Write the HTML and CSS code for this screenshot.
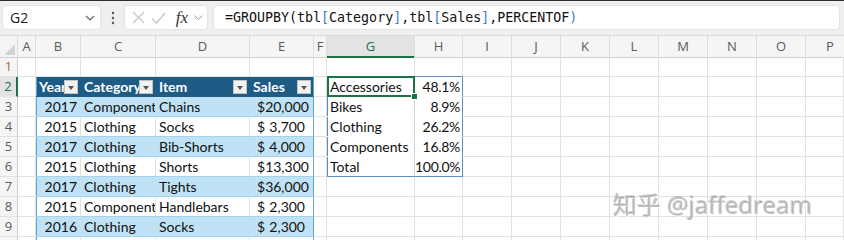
FILE: index.html
```html
<!DOCTYPE html>
<html lang="en">
<head>
    <meta charset="UTF-8">
    <meta name="viewport" content="width=device-width, initial-scale=1.0">
    <title>GROUPBY PERCENTOF</title>
    <link rel="stylesheet" href="styles.css">
</head>
<body>
<div class="app">
    <div class="toolbar">
        <div class="namebox">
            <span>G2</span>
            <svg class="chev" width="10" height="6" viewBox="0 0 10 6"><path d="M1 1l4 4 4-4" fill="none" stroke="#666" stroke-width="1.2"/></svg>
        </div>
        <div class="grip">
            <svg width="4" height="14" viewBox="0 0 4 14"><circle cx="2" cy="2" r="1.2" fill="#555"/><circle cx="2" cy="7" r="1.2" fill="#555"/><circle cx="2" cy="12" r="1.2" fill="#555"/></svg>
        </div>
        <div class="fxbox">
            <svg class="ico" width="13" height="13" viewBox="0 0 13 13"><path d="M1 1l11 11M12 1L1 12" stroke="#c4c4c4" stroke-width="1.2"/></svg>
            <svg class="ico" width="15" height="12" viewBox="0 0 15 12"><path d="M1 6.5l4.5 4.5L14 1" fill="none" stroke="#c4c4c4" stroke-width="1.2"/></svg>
            <span class="fx">fx</span>
            <svg width="9" height="5" viewBox="0 0 9 5"><path d="M0.5 0.5l4 4 4-4" fill="none" stroke="#999" stroke-width="1"/></svg>
        </div>
        <div class="formula">=GROUPBY(tbl<b>[</b>Category<b>]</b>,tbl<b>[</b>Sales<b>]</b>,PERCENTOF<b>)</b></div>
    </div>

    <div class="sheet">
        <div class="hdr">
            <div class="corner"></div>
            <div>A</div><div>B</div><div>C</div><div>D</div><div>E</div><div>F</div>
            <div class="on">G</div><div>H</div><div>I</div><div>J</div><div>K</div>
            <div>L</div><div>M</div><div>N</div><div>O</div><div>P</div>
        </div>

        <div class="row">
            <div class="rh first">1</div><div></div><div></div><div></div><div></div><div></div><div></div>
            <div class="sp-top"></div><div class="sp-top"></div><div class="rest"></div>
        </div>
        <div class="row">
            <div class="rh on">2</div><div></div>
            <div class="th tl">Year<span class="flt"></span></div>
            <div class="th">Category<span class="flt"></span></div>
            <div class="th">Item<span class="flt"></span></div>
            <div class="th tr">Sales<span class="flt"></span></div>
            <div></div>
            <div class="sp-g cur">Accessories<span class="sel"></span><span class="handle"></span></div>
            <div class="sp-h">48.1%</div><div class="rest"></div>
        </div>
        <div class="row">
            <div class="rh">3</div><div></div>
            <div class="band tl num">2017</div><div class="band">Component</div><div class="band">Chains</div>
            <div class="band tr acct"><span>$</span><span>20,000</span></div>
            <div></div><div class="sp-g">Bikes</div><div class="sp-h">8.9%</div><div class="rest"></div>
        </div>
        <div class="row">
            <div class="rh">4</div><div></div>
            <div class="plain tl num">2015</div><div class="plain">Clothing</div><div class="plain">Socks</div>
            <div class="plain tr acct"><span>$</span><span>3,700</span></div>
            <div></div><div class="sp-g">Clothing</div><div class="sp-h">26.2%</div><div class="rest"></div>
        </div>
        <div class="row">
            <div class="rh">5</div><div></div>
            <div class="band tl num">2017</div><div class="band">Clothing</div><div class="band">Bib-Shorts</div>
            <div class="band tr acct"><span>$</span><span>4,000</span></div>
            <div></div><div class="sp-g">Components</div><div class="sp-h">16.8%</div><div class="rest"></div>
        </div>
        <div class="row">
            <div class="rh">6</div><div></div>
            <div class="plain tl num">2015</div><div class="plain">Clothing</div><div class="plain">Shorts</div>
            <div class="plain tr acct"><span>$</span><span>13,300</span></div>
            <div></div><div class="sp-g sp-end">Total</div><div class="sp-h sp-end">100.0%</div><div class="rest"></div>
        </div>
        <div class="row">
            <div class="rh">7</div><div></div>
            <div class="band tl num">2017</div><div class="band">Clothing</div><div class="band">Tights</div>
            <div class="band tr acct"><span>$</span><span>36,000</span></div>
            <div></div><div></div><div></div><div class="rest"></div>
        </div>
        <div class="row">
            <div class="rh">8</div><div></div>
            <div class="plain tl num">2015</div><div class="plain">Component</div><div class="plain">Handlebars</div>
            <div class="plain tr acct"><span>$</span><span>2,300</span></div>
            <div></div><div></div><div></div><div class="rest"></div>
        </div>
        <div class="row">
            <div class="rh">9</div><div></div>
            <div class="band tl num">2016</div><div class="band">Clothing</div><div class="band">Socks</div>
            <div class="band tr acct"><span>$</span><span>2,300</span></div>
            <div></div><div></div><div></div><div class="rest"></div>
        </div>
        <div class="row">
            <div class="rh"></div><div></div><div class="plain tl"></div><div></div><div></div><div class="tr"></div><div></div>
            <div></div><div></div><div class="rest"></div>
        </div>
    </div>

    <div class="watermark">知乎 @jaffedream</div>
</div>
</body>
</html>
```

FILE: styles.css
```css
body {
    margin: 0;
    background: #fff;
    font-family: "Lato", "Open Sans", sans-serif;
}
.app {
    position: relative;
    width: 844px;
    height: 240px;
    overflow: hidden;
}

/* formula bar */
.toolbar {
    height: 36px;
    border-top: 1px solid #2e2e2e;
    border-bottom: 1px solid #dadada;
    background: #efefef;
    display: flex;
    align-items: flex-start;
    padding: 4px 4px 0 2px;
    box-sizing: border-box;
}
.namebox, .fxbox, .formula {
    height: 25px;
    background: #fff;
    border: 1px solid #e4e4e4;
    border-radius: 4px;
    box-sizing: border-box;
    display: flex;
    align-items: center;
}
.namebox {
    width: 99px;
    padding: 0 4px 0 7px;
    justify-content: space-between;
    font-family: "Open Sans", sans-serif;
    font-size: 14px;
    color: #222;
}
.namebox .chev {
    margin-right: 1px;
}
.grip {
    width: 23px;
    height: 25px;
    display: flex;
    align-items: center;
    justify-content: center;
}
.fxbox {
    width: 84px;
    padding: 0 4px 0 7px;
    justify-content: space-between;
}
.fx {
    font-family: "Liberation Serif", serif;
    font-style: italic;
    font-size: 17px;
    color: #333;
    margin-left: 4px;
}
.formula {
    flex: 1;
    margin-left: 5px;
    padding-left: 11px;
    font-family: "DejaVu Sans Mono", monospace;
    font-size: 13.3px;
    color: #111;
}
.formula b {
    font-weight: normal;
    color: #3f7cbf;
}

/* grid */
.hdr {
    display: grid;
    grid-template-columns: 18px 18px 45px 75px 94px 64px 13px 88px 48px repeat(8, 49px);
    height: 21px;
    background: #f5f5f5;
}
.row {
    display: grid;
    grid-template-columns: 18px 18px 45px 75px 94px 64px 13px 88px 48px 1fr;
    height: 20px;
}
.hdr > div {
    border-right: 1px solid #dcdcdc;
    border-bottom: 1px solid #cfcfcf;
    box-sizing: border-box;
    text-align: center;
    font-family: "Open Sans", sans-serif;
    font-size: 13px;
    line-height: 20px;
    color: #5a5a5a;
}
.hdr .on {
    background: #e3e3e3;
    color: #1e7145;
    border-bottom: 2px solid #1e7145;
}
.corner {
    position: relative;
}
.corner::after {
    content: "";
    position: absolute;
    right: 2px;
    bottom: 2px;
    border-left: 11px solid transparent;
    border-bottom: 11px solid #d4d4d4;
}
.row > div {
    border-right: 1px solid #e1e1e1;
    border-bottom: 1px solid #e1e1e1;
    box-sizing: border-box;
    padding: 0 3px;
    font-size: 14px;
    line-height: 19px;
    color: #111;
    white-space: nowrap;
    overflow: hidden;
}
.row > .rh {
    background: #f5f5f5;
    border-right-color: #cfcfcf;
    text-align: center;
    padding: 0;
    font-family: "Open Sans", sans-serif;
    font-size: 13px;
    color: #5a5a5a;
}
.row > .rh.first {
    color: #a8683e;
}
.row > .rh.on {
    background: #e3e3e3;
    color: #1e7145;
    border-right: 2px solid #1e7145;
}
.row > .rest {
    padding: 0;
    background: repeating-linear-gradient(to right, transparent 0 48px, #e1e1e1 48px 49px);
}

/* excel table */
.row > .th {
    position: relative;
    background: #1e5b85;
    border-color: #1e5b85;
    color: #fff;
    font-weight: bold;
}
.flt {
    position: absolute;
    right: 2px;
    top: 3px;
    width: 14px;
    height: 14px;
    box-sizing: border-box;
    background: #f2f2f2;
    border: 1px solid #c4c4c4;
}
.flt::after {
    content: "";
    position: absolute;
    left: 3px;
    top: 5px;
    border-left: 3.5px solid transparent;
    border-right: 3.5px solid transparent;
    border-top: 4px solid #555;
}
.row > .band {
    background: #c0e2f5;
    border-right-color: #c0e2f5;
    border-bottom-color: #a6d2ee;
}
.row > .plain {
    background: #fff;
    border-bottom-color: #a6d2ee;
}
.row > .tl {
    box-shadow: inset 1px 0 #5fa6d8;
}
.row > .tr {
    border-right-color: #5fa6d8;
}
.row > .num {
    text-align: right;
}
.row > .acct {
    display: flex;
    justify-content: space-between;
    padding: 0 8px 0 7px;
}

/* spilled GROUPBY result */
.row > .sp-top {
    border-bottom-color: #5d8dba;
}
.row > .sp-g {
    box-shadow: inset 1px 0 #5d8dba;
    border-right-color: #d4d4d4;
    border-bottom-color: #fff;
}
.row > .sp-h {
    text-align: right;
    padding: 0 2px 0 0;
    letter-spacing: -0.3px;
    border-right-color: #5d8dba;
    border-bottom-color: #fff;
}
.row > .sp-end {
    border-bottom-color: #5d8dba;
}
.row > .cur {
    position: relative;
    overflow: visible;
}
.sel {
    position: absolute;
    left: 0;
    top: -1px;
    right: -1px;
    bottom: -1px;
    border: 2px solid #1e7145;
}
.handle {
    position: absolute;
    right: -4px;
    bottom: -4px;
    width: 5px;
    height: 5px;
    background: #1e7145;
    border: 1px solid #fff;
    z-index: 2;
}

.watermark {
    position: absolute;
    left: 613px;
    top: 186px;
    font-family: "Noto Sans", "Noto Sans CJK SC", sans-serif;
    font-size: 24px;
    color: rgba(150, 150, 150, 0.6);
    text-shadow: 1px 1px 0 rgba(255, 255, 255, 0.9), -1px -1px 0 rgba(110, 110, 110, 0.3);
    white-space: nowrap;
}
```
